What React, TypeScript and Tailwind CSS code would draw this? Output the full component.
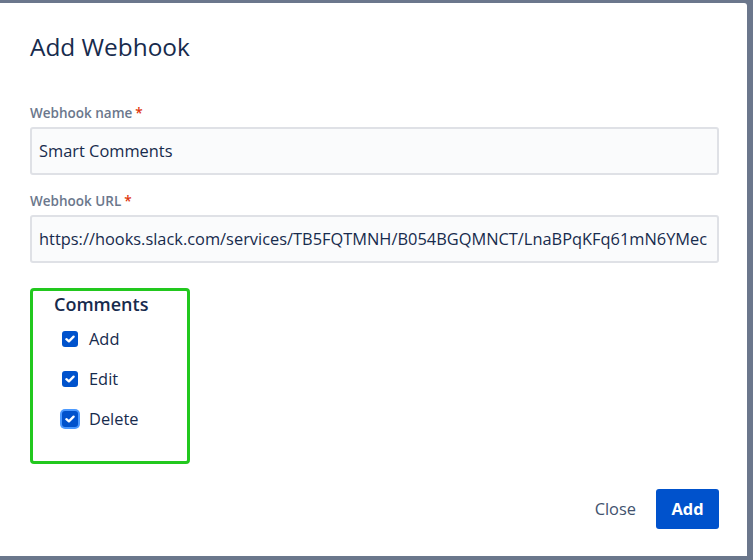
const FONT = { fontFamily: '"Open Sans", "Noto Sans", "Liberation Sans", sans-serif' };

function Check({ focused }: { focused?: boolean }) {
  return (
    <span
      className={
        'flex h-[16px] w-[16px] items-center justify-center rounded-[3px] bg-[#0052cc] ' +
        (focused ? 'ring-2 ring-[#4c9aff]' : '')
      }
    >
      <svg width="10" height="8" viewBox="0 0 10 8" fill="none">
        <path d="M1.4 4.2 L3.9 6.4 L8.6 1.6" stroke="white" strokeWidth="2.3" strokeLinecap="round" strokeLinejoin="round" />
      </svg>
    </span>
  );
}

function Field({ label, value }: { label: string; value: string }) {
  return (
    <div className="flex flex-col">
      <label className="mb-[6px] text-[13.5px] font-semibold leading-[16px] text-[#6b778c]">
        {label}
        <span className="ml-[3px] text-[#de350b]">*</span>
      </label>
      <div className="flex h-[48px] items-center overflow-hidden rounded-[3px] border-2 border-[#dfe1e6] bg-[#fafbfc] px-[7px]">
        <span className="whitespace-nowrap text-[16.4px] text-[#172b4d]">{value}</span>
      </div>
    </div>
  );
}

export default function App() {
  const events = [
    { name: 'Add', focused: false },
    { name: 'Edit', focused: false },
    { name: 'Delete', focused: true },
  ];

  return (
    <div className="h-[560px] w-[753px] bg-[#6b778c] pr-[6px] pt-[3px] pb-[4px]" style={FONT}>
      <div className="flex h-full flex-col rounded-tr-[3px] bg-white px-[30px]">
        <h1 className="mt-[27px] text-[24.4px] font-normal leading-[34px] text-[#172b4d]">Add Webhook</h1>

        <div className="mt-[41px] flex w-[689px] flex-col gap-[18px]">
          <Field label="Webhook name" value="Smart Comments" />
          <Field
            label="Webhook URL"
            value="https://hooks.slack.com/services/TB5FQTMNH/B054BGQMNCT/LnaBPqKFq61mN6YMec"
          />
        </div>

        <div className="mt-[25px] flex h-[176px] w-[160px] flex-col rounded-[4px] border-[3px] border-[#22c81e] pl-[21px] pt-[1px]">
          <span className="text-[18px] font-semibold leading-[24px] text-[#172b4d]">Comments</span>
          <div className="mt-[13px] flex flex-col gap-[20px] pl-[8px]">
            {events.map((e) => (
              <div key={e.name} className="flex h-[20px] items-center gap-[11px]">
                <Check focused={e.focused} />
                <span className="text-[16.4px] text-[#172b4d]">{e.name}</span>
              </div>
            ))}
          </div>
        </div>

        <div className="mt-[25px] flex w-[689px] items-center justify-end gap-[20px]">
          <button className="text-[16.4px] text-[#42526e]">Close</button>
          <button className="h-[40px] w-[63px] rounded-[3px] bg-[#0052cc] text-[16.4px] font-bold text-white">Add</button>
        </div>
      </div>
    </div>
  );
}
